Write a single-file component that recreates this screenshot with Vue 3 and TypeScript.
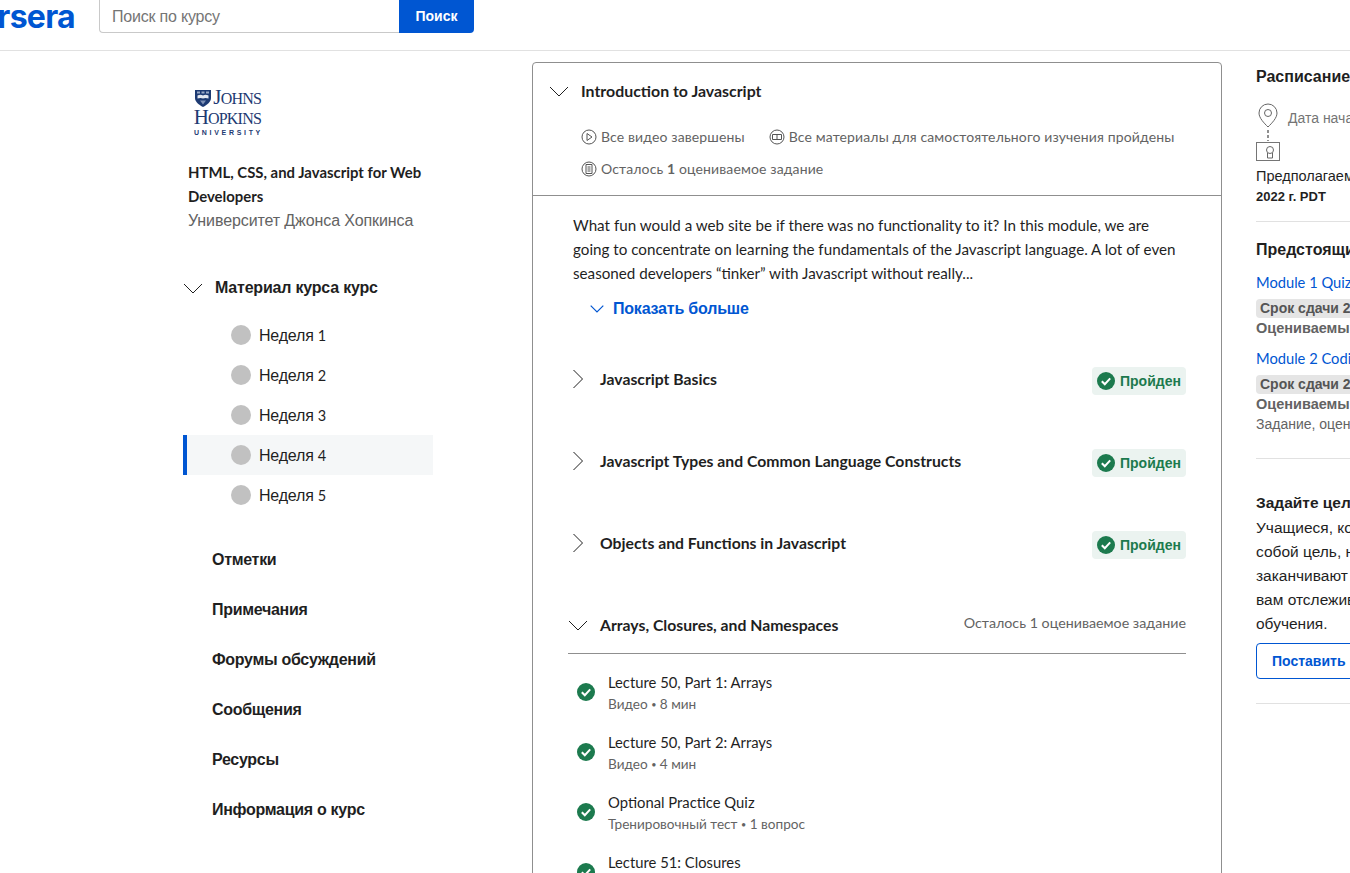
<script setup lang="ts">
interface Lesson {
  title: string
  type: string
  meta: string
}

const weeks = ['1', '2', '3', '4', '5']
const navLinks = ['Отметки', 'Примечания', 'Форумы обсуждений', 'Сообщения', 'Ресурсы', 'Информация о курс']
const doneGroups = [
  'Javascript Basics',
  'Javascript Types and Common Language Constructs',
  'Objects and Functions in Javascript',
]
const lessons: Lesson[] = [
  { title: 'Lecture 50, Part 1: Arrays', type: 'Видео', meta: '8 мин' },
  { title: 'Lecture 50, Part 2: Arrays', type: 'Видео', meta: '4 мин' },
  { title: 'Optional Practice Quiz', type: 'Тренировочный тест', meta: '1 вопрос' },
  { title: 'Lecture 51: Closures', type: 'Видео', meta: '12 мин' },
]
</script>

<template>
  <div class="page">
    <header class="topbar">
      <span class="brand">coursera</span>
      <div class="search">
        <span class="search-input">Поиск по курсу</span>
        <span class="search-btn">Поиск</span>
      </div>
    </header>

    <div class="columns">
      <aside class="sidebar">
        <div class="logo">
          <svg class="shield" width="16" height="17" viewBox="0 0 16 17">
            <path d="M0 0h16v8c0 4-4 7-8 9-4-2-8-5-8-9z" fill="#1d3a72" />
            <path d="M2.500 5.500c2-1 4-1 5.500 0 1.500-1 3.500-1 5.500 0v3c-2-.8-4-.8-5.500 0-1.500-.8-3.500-.8-5.500 0z" fill="#e4e8f0" />
            <path d="M5 10.500h6l-3 4z" fill="#7f91b5" />
            <path d="M2 1.500h3v2H2zM6.500 1.500h3v2h-3zM11 1.500h3v2h-3z" fill="#9aa9c6" />
          </svg>
          <span class="logo-first">J<small>OHNS</small></span>
          <span class="logo-second">H<small>OPKINS</small></span>
          <span class="logo-third">UNIVERSITY</span>
        </div>
        <div class="course-title">HTML, CSS, and Javascript for Web Developers</div>
        <div class="course-org">Университет Джонса Хопкинса</div>

        <div class="material">
          <svg class="chev-down" width="20" height="11" viewBox="0 0 20 11">
            <path d="M1 1l9 9 9-9" fill="none" stroke="#1f1f1f" stroke-width="1" />
          </svg>
          <span>Материал курса курс</span>
        </div>
        <ul class="weeks">
          <li v-for="w in weeks" :key="w" class="week" :class="{ active: w === '4' }">
            <span class="dot"></span>
            <span class="week-label">Неделя <span class="week-num">{{ w }}</span></span>
          </li>
        </ul>
        <nav class="nav">
          <div v-for="link in navLinks" :key="link" class="nav-link">{{ link }}</div>
        </nav>
      </aside>

      <main class="card">
        <section class="card-head">
          <div class="card-title">
            <svg width="20" height="11" viewBox="0 0 20 11">
              <path d="M1 1l9 9 9-9" fill="none" stroke="#1f1f1f" stroke-width="1" />
            </svg>
            <span>Introduction to Javascript</span>
          </div>
          <div class="stats">
            <span class="stat">
              <svg width="16" height="16" viewBox="0 0 16 16">
                <circle cx="8" cy="8" r="7" fill="none" stroke="#555" />
                <path d="M6 4.500v7L11 8z" fill="none" stroke="#555" />
              </svg>
              Все видео завершены
            </span>
            <span class="stat">
              <svg width="16" height="16" viewBox="0 0 16 16">
                <circle cx="8" cy="8" r="7" fill="none" stroke="#555" />
                <path d="M3.500 5.500h9v5h-9zM8 5.500v5" fill="none" stroke="#555" />
              </svg>
              Все материалы для самостоятельного изучения пройдены
            </span>
          </div>
          <div class="stats">
            <span class="stat">
              <svg width="16" height="16" viewBox="0 0 16 16">
                <circle cx="8" cy="8" r="7" fill="none" stroke="#555" />
                <path d="M5 3.500h6v9H5zM6.500 6h3M6.500 8h3M6.500 10h3" fill="none" stroke="#555" />
              </svg>
              <span>Осталось <b>1</b> оцениваемое задание</span>
            </span>
          </div>
        </section>

        <section class="card-body">
          <p class="intro">
            What fun would a web site be if there was no functionality to it? In this module, we are
            going to concentrate on learning the fundamentals of the Javascript language. A lot of even
            seasoned developers “tinker” with Javascript without really...
          </p>
          <div class="more">
            <svg width="14" height="8" viewBox="0 0 14 8">
              <path d="M.7.7L7 7 13.300.7" fill="none" stroke="#0056d2" stroke-width="1.200" />
            </svg>
            <span>Показать больше</span>
          </div>

          <div v-for="g in doneGroups" :key="g" class="group">
            <svg class="chev-right" width="12" height="20" viewBox="0 0 12 20">
              <path d="M1.500 1l9 9-9 9" fill="none" stroke="#1f1f1f" />
            </svg>
            <span class="group-title">{{ g }}</span>
            <span class="badge">
              <svg width="18" height="18" viewBox="0 0 18 18">
                <circle cx="9" cy="9" r="9" fill="#1c7a4e" />
                <path d="M4.800 9.200l3 3 5.400-5.800" fill="none" stroke="#fff" stroke-width="2" />
              </svg>
              Пройден
            </span>
          </div>

          <div class="group open">
            <svg class="chev-open" width="20" height="11" viewBox="0 0 20 11">
              <path d="M1 1l9 9 9-9" fill="none" stroke="#1f1f1f" />
            </svg>
            <span class="group-title">Arrays, Closures, and Namespaces</span>
            <span class="left-note">Осталось 1 оцениваемое задание</span>
          </div>

          <div v-for="l in lessons" :key="l.title" class="lesson">
            <svg class="lesson-check" width="18" height="18" viewBox="0 0 18 18">
              <circle cx="9" cy="9" r="9" fill="#1c7a4e" />
              <path d="M4.800 9.200l3 3 5.400-5.800" fill="none" stroke="#fff" stroke-width="2" />
            </svg>
            <div>
              <div class="lesson-title">{{ l.title }}</div>
              <div class="lesson-meta">{{ l.type }} <span class="sep">•</span> {{ l.meta }}</div>
            </div>
          </div>
        </section>
      </main>

      <aside class="rail">
        <section class="block schedule">
          <h3>Расписание</h3>
          <div class="start">
            <svg width="24" height="26" viewBox="0 0 24 26">
              <path d="M12 1a9 9 0 0 0-9 9c0 5 5 10 9 14 4-4 9-9 9-14a9 9 0 0 0-9-9z" fill="none" stroke="#666" />
              <circle cx="12" cy="10" r="3.500" fill="none" stroke="#666" />
            </svg>
            <span>Дата начала курса: 16 апреля</span>
          </div>
          <span class="dash"></span>
          <span class="cert">
            <svg width="12" height="14" viewBox="0 0 12 14">
              <circle cx="6" cy="5" r="3.500" fill="none" stroke="#666" />
              <path d="M3.500 8v5H8.500V8" fill="none" stroke="#666" />
            </svg>
          </span>
          <div class="line estimate">Предполагаемая дата окончания: 20 мая</div>
          <div class="line strong">2022 г. PDT</div>
        </section>

        <section class="block upcoming">
          <h3>Предстоящие задания</h3>
          <a class="task">Module 1 Quiz</a>
          <span class="due">Срок сдачи 24 апреля</span>
          <div class="line graded">Оцениваемый тест</div>
          <a class="task">Module 2 Coding Assignment</a>
          <span class="due">Срок сдачи 24 апреля</span>
          <div class="line graded">Оцениваемый элемент</div>
          <div class="line grey">Задание, оцениваемое программой</div>
        </section>

        <section class="block goal">
          <h3>Задайте цель</h3>
          <p>Учащиеся, которые ставят перед</p>
          <p>собой цель, намного чаще</p>
          <p>заканчивают курс. Мы поможем</p>
          <p>вам отслеживать ход вашего</p>
          <p>обучения.</p>
          <span class="goal-btn">Поставить цель</span>
        </section>
      </aside>
    </div>
  </div>
</template>

<style>
html,
body {
  overflow: hidden;
  background: #fff;
}
</style>

<style scoped>
.page {
  width: 1350px;
  height: 873px;
  overflow: hidden;
  font-family: Lato, 'Liberation Sans', sans-serif;
  color: #1f1f1f;
  font-size: 14px;
  background: #fff;
}
.topbar {
  height: 50px;
  border-bottom: 1px solid #e1e1e1;
  display: flex;
  align-items: flex-start;
  gap: 24px;
}
.brand {
  width: 75px;
  height: 33px;
  display: flex;
  justify-content: flex-end;
  overflow: hidden;
  font: 700 32px/34px Inter, sans-serif;
  letter-spacing: -0.7px;
  color: #0056d2;
}
.search {
  display: flex;
  height: 33px;
  width: 375px;
}
.search-input {
  width: 300px;
  box-sizing: border-box;
  border: 1px solid #c9c9c9;
  border-top: 0;
  border-right: 0;
  border-radius: 0 0 0 4px;
  padding-left: 12px;
  font: 16px/33px 'Liberation Sans', sans-serif;
  letter-spacing: -0.2px;
  color: #757575;
}
.search-btn {
  flex: 1;
  background: #0056d2;
  color: #fff;
  border-radius: 0 0 4px 0;
  text-align: center;
  font: 700 14px/33px 'Liberation Sans', sans-serif;
}
.columns {
  display: flex;
  align-items: flex-start;
}
.sidebar {
  width: 250px;
  margin-left: 183px;
  padding-top: 37px;
  flex: none;
}
.logo {
  width: 66px;
  height: 50px;
  margin-left: 12px;
  position: relative;
  color: #1d3a72;
  font-family: 'Liberation Serif', serif;
  display: flex;
  flex-direction: column;
  align-items: flex-end;
}
.shield {
  position: absolute;
  left: 0;
  top: 2px;
}
.logo-first,
.logo-second {
  font-size: 21px;
  line-height: 19px;
  letter-spacing: -0.8px;
}
.logo small {
  font-size: 16px;
}
.logo-third {
  font: 700 7px/9px 'Liberation Sans', sans-serif;
  letter-spacing: 2.700px;
  margin-right: -2px;
}
.course-title {
  margin: 22px 0 0 5px;
  font-weight: 700;
  font-size: 14.900px;
  line-height: 24px;
}
.course-org {
  margin: 1px 0 0 5px;
  font: 16px/24px 'Liberation Sans', sans-serif;
  letter-spacing: -0.1px;
  color: #636363;
}
.material {
  margin: 43px 0 15px;
  height: 24px;
  display: flex;
  align-items: center;
  gap: 12px;
  font: 700 16px/24px 'Liberation Sans', sans-serif;
  letter-spacing: -0.2px;
}
.weeks {
  list-style: none;
  margin: 0;
  padding: 0;
}
.week {
  height: 40px;
  display: flex;
  align-items: center;
  gap: 8px;
  padding-left: 48px;
  font: 16px/24px 'Liberation Sans', sans-serif;
  letter-spacing: -0.2px;
}
.week-label {
  margin-top: 2px;
}
.week-num {
  font: 14.500px/24px Lato, sans-serif;
}
.week.active {
  background: #f5f7f8;
  box-shadow: inset 4px 0 0 #0056d2;
}
.dot {
  width: 20px;
  height: 20px;
  border-radius: 50%;
  background: #c1c1c1;
}
.nav {
  margin-top: 20px;
}
.nav-link {
  height: 50px;
  padding-left: 29px;
  font: 700 16px/50px 'Liberation Sans', sans-serif;
  letter-spacing: -0.3px;
}
.card {
  width: 690px;
  height: 900px;
  margin: 11px 0 0 99px;
  box-sizing: border-box;
  flex: none;
  border: 1px solid #8f8f8f;
  border-radius: 4px 4px 0 0;
}
.card-head {
  height: 133px;
  box-sizing: border-box;
  border-bottom: 1px solid #8f8f8f;
  padding: 16px 0 0 16px;
}
.card-title {
  display: flex;
  align-items: center;
  gap: 12px;
  font-size: 15.900px;
  font-weight: 700;
  line-height: 24px;
  margin-bottom: 24px;
}
.stats {
  height: 32px;
  display: flex;
  gap: 24px;
  padding-left: 32px;
  color: #636363;
  font-size: 14px;
  line-height: 20px;
}
.stat {
  display: flex;
  align-items: flex-start;
  gap: 4px;
  height: 20px;
  letter-spacing: 0.13px;
}
.stat svg {
  margin-top: 2px;
}
.card-body {
  padding: 17px 35px 0;
}
.intro {
  margin: 0 0 0 5px;
  width: 612px;
  font-size: 15.200px;
  line-height: 24px;
}
.more {
  margin: 12px 0 0 22px;
  height: 24px;
  display: flex;
  align-items: center;
  gap: 9px;
  color: #0056d2;
  font: 700 16px/24px 'Liberation Sans', sans-serif;
  letter-spacing: -0.2px;
}
.group {
  width: 618px;
  height: 82px;
  display: flex;
  align-items: flex-start;
  padding-top: 27px;
  box-sizing: border-box;
}
.more + .group {
  margin-top: 19px;
}
.chev-right {
  margin: 2px 16px 0 4px;
  flex: none;
}
.group-title {
  font-size: 15.750px;
  font-weight: 700;
  line-height: 24px;
}
.badge {
  margin-left: auto;
  width: 94px;
  height: 28px;
  box-sizing: border-box;
  padding-left: 5px;
  display: flex;
  align-items: center;
  gap: 5px;
  border-radius: 4px;
  background: #ebf3f0;
  color: #1c7a4e;
  font: 700 14px/20px 'Liberation Sans', sans-serif;
}
.group.open {
  height: 68px;
  border-bottom: 1px solid #8f8f8f;
}
.chev-open {
  margin: 7px 12px 0 0;
  flex: none;
}
.left-note {
  margin-left: auto;
  margin-top: -2px;
  color: #636363;
  font: 14.250px/24px Lato, 'Liberation Sans', sans-serif;
}
.lesson {
  height: 60px;
  display: flex;
  align-items: center;
  gap: 13px;
  padding-left: 9px;
}
.lesson-check {
  margin-top: -2px;
}
.group.open + .lesson {
  margin-top: 9px;
}
.lesson-title {
  font-size: 14.800px;
  line-height: 22px;
}
.lesson-meta {
  margin-top: 1px;
  font-size: 13.600px;
  line-height: 20px;
  color: #636363;
}
.sep {
  font-size: 9px;
  vertical-align: 1px;
}
.rail {
  flex: none;
  width: 360px;
  margin-left: 34px;
  white-space: nowrap;
}
.block {
  border-bottom: 1px solid #e1e1e1;
}
.block h3 {
  margin: 0;
  font: 700 16px/24px 'Liberation Sans', sans-serif;
}
.schedule {
  padding: 14px 0 14px;
}
.start {
  margin-top: 14px;
  display: flex;
  align-items: center;
  gap: 8px;
  color: #757575;
  font: 14px/20px 'Liberation Sans', sans-serif;
}
.start span {
  margin-top: 4px;
}
.dash {
  display: block;
  margin: 1px 0 1px 11px;
  width: 2px;
  height: 11px;
  background: repeating-linear-gradient(to bottom, #8f8f8f 0 3px, transparent 3px 5px);
}
.cert {
  display: flex;
  justify-content: flex-end;
  padding: 2px 3px 0 0;
  width: 24px;
  height: 19px;
  box-sizing: border-box;
  border: 1px solid #757575;
}
.line {
  font: 14px/20px 'Liberation Sans', sans-serif;
}
.estimate {
  margin-top: 5px;
  font-size: 14.500px;
  line-height: 21px;
}
.strong {
  font-weight: 700;
  font-size: 13px;
}
.graded {
  font-weight: 700;
  font-size: 14.500px;
  color: #636363;
}
.grey {
  color: #636363;
}
.upcoming {
  padding: 16px 0 24px;
}
.task {
  display: block;
  margin-top: 8px;
  color: #0056d2;
  font: 14.700px/24px Lato, 'Liberation Sans', sans-serif;
}
.due {
  display: block;
  width: max-content;
  margin-top: 5px;
  padding: 0 4px;
  height: 19px;
  border-radius: 4px;
  background: #e5e5e5;
  color: #555;
  font: 700 14px/19px 'Liberation Sans', sans-serif;
}
.goal {
  padding: 32px 0 24px;
  font: 15.500px/24px 'Liberation Sans', sans-serif;
}
.goal h3 {
  font-size: 15.500px;
  margin-bottom: 1px;
}
.goal p {
  margin: 0;
}
.goal-btn {
  display: block;
  width: 200px;
  height: 36px;
  margin-top: 7px;
  box-sizing: border-box;
  border: 1px solid #0056d2;
  border-radius: 4px;
  padding-left: 15px;
  color: #0056d2;
  font: 700 14px/34px 'Liberation Sans', sans-serif;
}
</style>
